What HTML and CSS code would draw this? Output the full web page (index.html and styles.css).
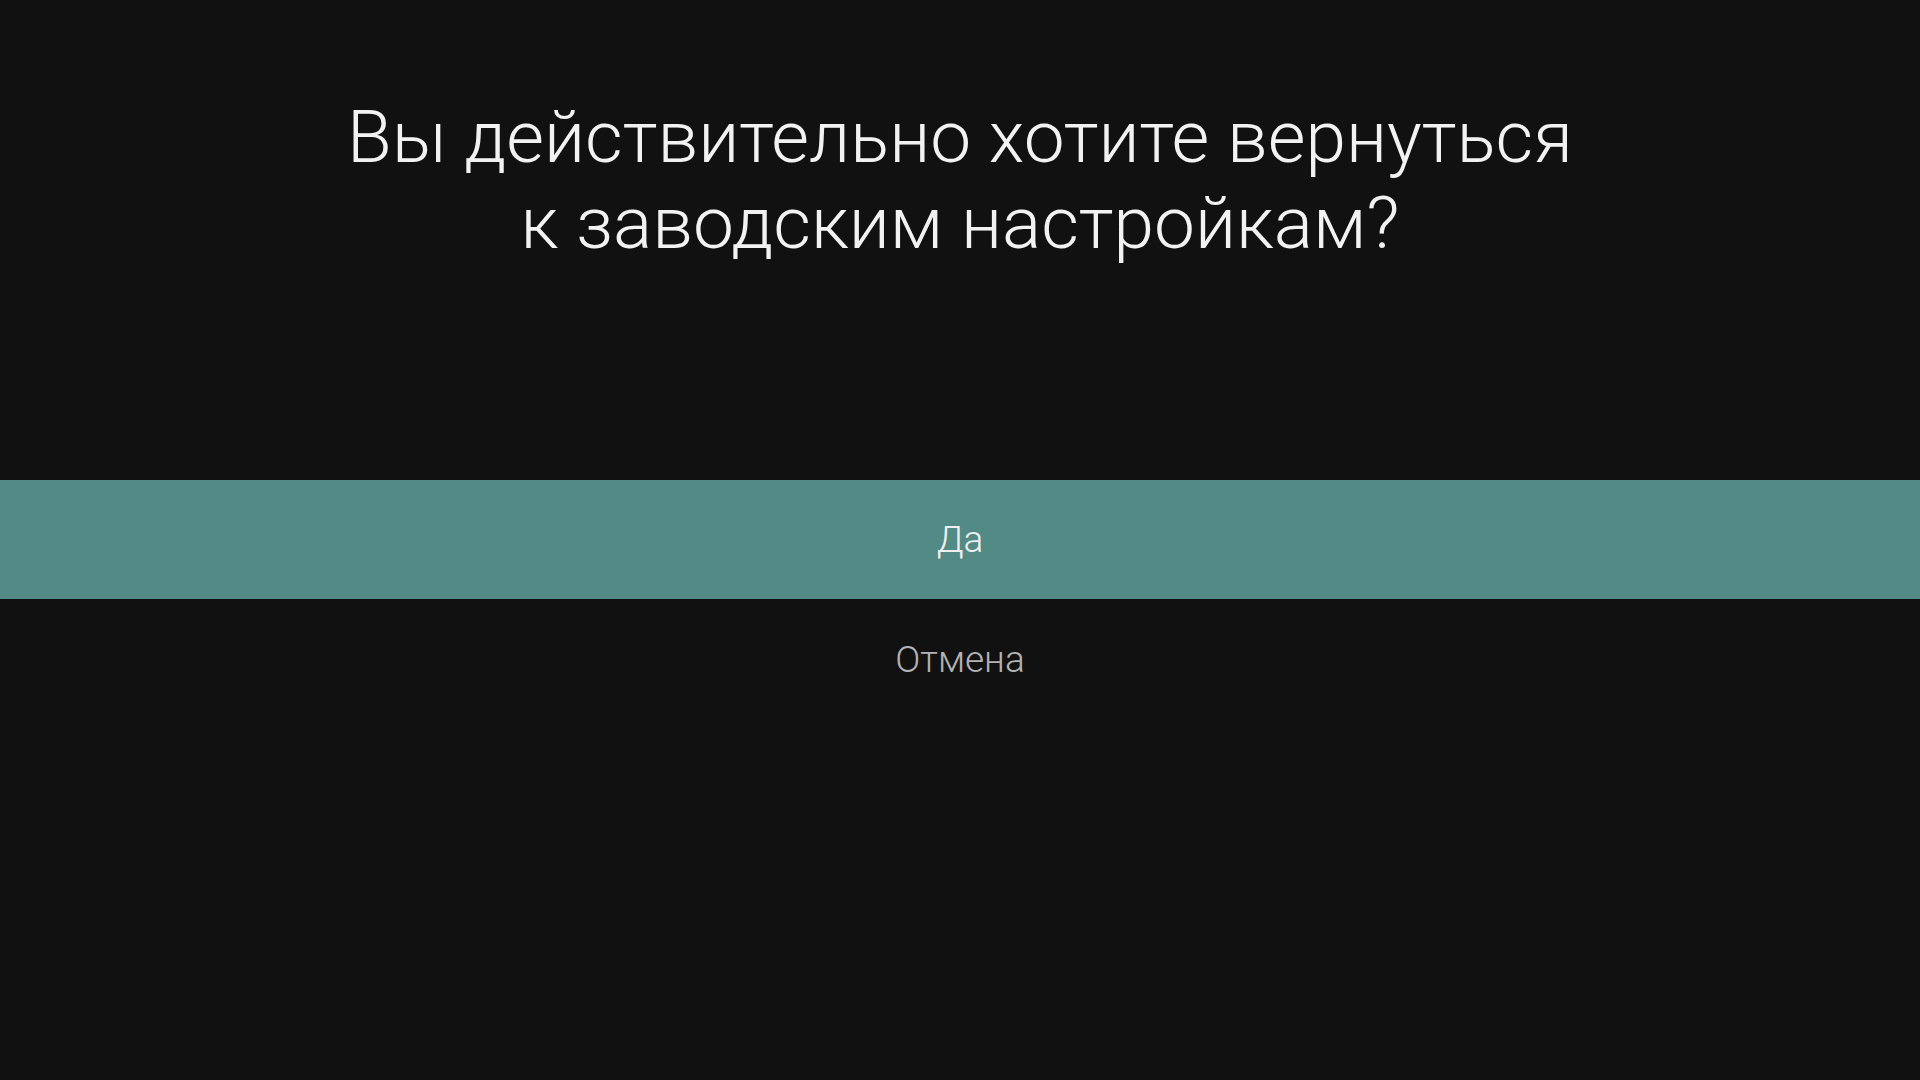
FILE: index.html
```html
<!DOCTYPE html>
<html lang="ru">
<head>
<meta charset="utf-8">
<link rel="stylesheet" href="styles.css">
</head>
<body>
<div class="screen">
  <h1 class="title">Вы действительно хотите вернуться<br>к заводским настройкам?</h1>
  <div class="options">
    <div class="option selected">Да</div>
    <div class="option">Отмена</div>
  </div>
</div>
</body>
</html>
```
FILE: styles.css
```css
html, body {
  margin: 0;
  padding: 0;
  background: #111111;
  width: 1920px;
  height: 1080px;
  overflow: hidden;
}
.screen {
  display: flex;
  flex-direction: column;
  font-family: Roboto, "Noto Sans", sans-serif;
}
.title {
  margin: 0;
  padding-top: 94px;
  height: 480px;
  box-sizing: border-box;
  text-align: center;
  font-weight: 300;
  font-size: 73px;
  line-height: 86px;
  color: #f2f2f2;
}
.options {
  display: flex;
  flex-direction: column;
}
.option {
  height: 120px;
  display: flex;
  align-items: center;
  justify-content: center;
  font-size: 37px;
  font-weight: 300;
  color: #b3b3b3;
}
.option.selected {
  height: 119px;
  background: #528a85;
  color: #f0f0f0;
}
```
